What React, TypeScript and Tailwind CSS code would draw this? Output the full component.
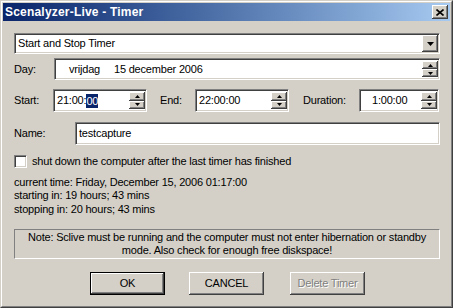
import React from 'react'

const sunken =
  'border border-t-[#808080] border-l-[#808080] border-b-white border-r-white shadow-[inset_1px_1px_0_#404040,inset_-1px_-1px_0_#d4d0c8]'
const raised =
  'shadow-[inset_-1px_-1px_0_#404040,inset_1px_1px_0_#ffffff,inset_-2px_-2px_0_#808080,inset_2px_2px_0_#d4d0c8]'

function Arrow({ up, size = 'small' }: { up?: boolean; size?: 'small' | 'big' }) {
  if (size === 'big') {
    return (
      <svg width="7" height="4" viewBox="0 0 7 4" className="block">
        <path d="M0 0h7L3.5 4z" fill="#000" />
      </svg>
    )
  }
  return (
    <svg width="5" height="3" viewBox="0 0 5 3" className="block">
      <path d={up ? 'M2.5 0L5 3H0z' : 'M0 0h5L2.5 3z'} fill="#000" />
    </svg>
  )
}

function Spinner() {
  return (
    <div className="flex flex-col w-[16px] h-full py-[2px] mr-[1px]">
      <div className={`flex-1 bg-[#d4d0c8] flex items-center justify-center ${raised}`}>
        <Arrow up />
      </div>
      <div className={`flex-1 bg-[#d4d0c8] flex items-center justify-center ${raised}`}>
        <Arrow />
      </div>
    </div>
  )
}

function SpinField({ className, children }: { className: string; children: React.ReactNode }) {
  return (
    <div className={`bg-white flex items-center ${sunken} ${className}`}>
      <div className="flex-1 flex items-center h-full">{children}</div>
      <Spinner />
    </div>
  )
}

export default function App() {
  return (
    <div
      className="w-[453px] h-[308px] bg-[#d4d0c8] border border-t-[#d4d0c8] border-l-[#d4d0c8] border-b-[#404040] border-r-[#404040] text-[11px] tracking-[-0.2px] text-black overflow-hidden"
      style={{ fontFamily: '"Liberation Sans", Arial, sans-serif' }}
    >
      <div className="h-full border border-t-white border-l-white border-b-[#808080] border-r-[#808080] p-[1px] flex flex-col">
        {/* title bar */}
        <div className="h-[18px] flex items-center justify-between bg-gradient-to-r from-[#0a246a] to-[#a6caf0] pl-[2px] pr-[2px]">
          <span className="text-white font-bold text-[12px] tracking-[0.2px]">Scenalyzer-Live - Timer</span>
          <div className={`w-[16px] h-[14px] bg-[#d4d0c8] flex items-center justify-center ${raised}`}>
            <svg width="8" height="7" viewBox="0 0 8 7" className="block">
              <path d="M0.5 0.5L7.5 6.5M7.5 0.5L0.5 6.5" stroke="#000" strokeWidth="1.6" />
            </svg>
          </div>
        </div>

        <div className="flex flex-col pl-[11px] pr-[10px]">
          {/* combo */}
          <div className={`mt-[12px] h-[21px] bg-white flex items-center ${sunken}`}>
            <span className="flex-1 pl-[3px]">Start and Stop Timer</span>
            <div className={`w-[16px] h-[17px] mr-[1px] bg-[#d4d0c8] flex items-center justify-center ${raised}`}>
              <Arrow size="big" />
            </div>
          </div>

          {/* day */}
          <div className="mt-[4px] flex items-center h-[22px]">
            <span className="w-[40px]">Day:</span>
            <SpinField className="flex-1 h-full">
              <span className="pl-[14px]">vrijdag</span>
              <span className="pl-[14px]">15 december 2006</span>
            </SpinField>
          </div>

          {/* times */}
          <div className="mt-[9px] flex items-center h-[23px]">
            <span className="w-[39px]">Start:</span>
            <SpinField className="w-[94px] h-full">
              <span className="pl-[3px]">21:00:</span>
              <span className="bg-[#0a246a] text-white leading-[14px]">00</span>
            </SpinField>
            <span className="ml-[13px] w-[35px]">End:</span>
            <SpinField className="w-[94px] h-full">
              <span className="pl-[3px]">22:00:00</span>
            </SpinField>
            <span className="ml-[14px] w-[56px]">Duration:</span>
            <SpinField className="w-[80px] h-full">
              <span className="pl-[12px]">1:00:00</span>
            </SpinField>
          </div>

          {/* name */}
          <div className="mt-[10px] flex items-center h-[23px]">
            <span className="w-[61px]">Name:</span>
            <div className={`flex-1 h-full bg-white flex items-center pl-[3px] ${sunken}`}>testcapture</div>
          </div>

          {/* checkbox */}
          <div className="mt-[8px] flex items-center">
            <div className={`w-[13px] h-[13px] bg-white ${sunken}`} />
            <span className="ml-[5px]">shut down the computer after the last timer has finished</span>
          </div>

          {/* info */}
          <div className="mt-[6px] leading-[13.5px]">
            <div>current time: Friday, December 15, 2006 01:17:00</div>
            <div>starting in: 19 hours; 43 mins</div>
            <div>stopping in: 20 hours; 43 mins</div>
          </div>

          {/* note */}
          <div className="mt-[13px] h-[30px] border border-t-[#808080] border-l-[#808080] border-b-white border-r-white flex flex-col items-center justify-center leading-[13px] text-center">
            <div>Note: Sclive must be running and the computer must not enter hibernation or standby</div>
            <div>mode. Also check for enough free diskspace!</div>
          </div>

          {/* buttons */}
          <div className="mt-[13px] flex pl-[76px] gap-[24px]">
            <div className="w-[75px] h-[23px] border border-black bg-[#d4d0c8] flex items-center justify-center shadow-[inset_-1px_-1px_0_#404040,inset_1px_1px_0_#ffffff,inset_-2px_-2px_0_#808080]">
              OK
            </div>
            <div className={`w-[75px] h-[23px] bg-[#d4d0c8] flex items-center justify-center ${raised}`}>CANCEL</div>
            <div
              className={`ml-[2px] w-[75px] h-[23px] bg-[#d4d0c8] flex items-center justify-center text-[#808080] [text-shadow:1px_1px_0_#ffffff] ${raised}`}
            >
              Delete Timer
            </div>
          </div>
        </div>
      </div>
    </div>
  )
}
